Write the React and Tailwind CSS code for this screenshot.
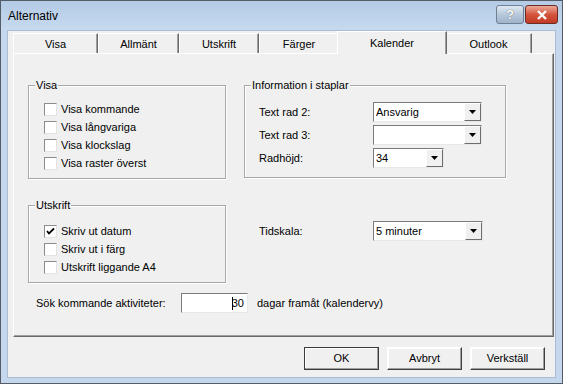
import React from 'react'

const font = "font-['Tahoma','Liberation_Sans',sans-serif]"

function Checkbox({ checked }) {
  return (
    <span className="w-[13px] h-[13px] bg-white border border-t-[#8c8c8c] border-l-[#8c8c8c] border-r-[#e3e3e3] border-b-[#e3e3e3] flex items-center justify-center shrink-0">
      {checked && (
        <svg width="9" height="9" viewBox="0 0 9 9">
          <path d="M1 4 L3 6.5 L8 1.5" stroke="#000" strokeWidth="1.8" fill="none" />
        </svg>
      )}
    </span>
  )
}

function CheckRow({ label, checked }) {
  return (
    <div className="flex items-center gap-[4px] h-[18px]">
      <Checkbox checked={checked} />
      <span>{label}</span>
    </div>
  )
}

function Group({ title, className, children }) {
  return (
    <div className={`relative border border-[#a8a8a8] shadow-[inset_1px_1px_0_#fff,1px_1px_0_#fff] ${className}`}>
      <span className="absolute -top-[8px] left-[6px] bg-[#f0f0f0] px-[1px] leading-[14px]">{title}</span>
      {children}
    </div>
  )
}

function Combo({ value, width }) {
  return (
    <div className={`h-[20px] bg-white flex items-stretch border border-t-[#7a7a7a] border-l-[#7a7a7a] border-r-[#e8e8e8] border-b-[#e8e8e8] ${width}`}>
      <span className="flex-1 pl-[2px] flex items-center">{value}</span>
      <span className="w-[17px] bg-[#f0f0f0] flex items-center justify-center border border-t-white border-l-white border-r-[#6d6d6d] border-b-[#6d6d6d]">
        <svg width="7" height="4" viewBox="0 0 7 4">
          <path d="M0 0 H7 L3.5 4 Z" fill="#000" />
        </svg>
      </span>
    </div>
  )
}

function Button({ label, isDefault }) {
  return (
    <button
      className={`w-[75px] h-[23px] bg-[#f0f0f0] text-black border ${
        isDefault ? 'border-[#3c3c3c]' : 'border-t-white border-l-white border-r-[#404040] border-b-[#404040]'
      } shadow-[inset_-1px_-1px_0_#a0a0a0,inset_1px_1px_0_#fff]`}
    >
      {label}
    </button>
  )
}

const tabs = [
  { label: 'Visa', w: 'w-[85px]' },
  { label: 'Allmänt', w: 'w-[81px]' },
  { label: 'Utskrift', w: 'w-[80px]' },
  { label: 'Färger', w: 'w-[80px]' },
  { label: 'Kalender', w: 'w-[110px]', active: true },
  { label: 'Outlook', w: 'w-[87px]' },
]

export default function App() {
  return (
    <div className={`w-[563px] h-[384px] ${font} text-[11px] text-black flex flex-col bg-[#c4d7ed] border border-[#555c66] overflow-hidden`}>
      {/* Title bar */}
      <div className="h-[29px] shrink-0 flex items-center pl-[7px] pr-[4px] bg-gradient-to-b from-[#b4cbe6] to-[#c6d9ef]">
        <span className="text-[12px] flex-1">Alternativ</span>
        <div className="flex gap-[1px] -mt-[2px]">
          <span className="w-[28px] h-[19px] rounded-[3px] border border-[#6f7f94] bg-gradient-to-b from-[#dfe8f2] via-[#b9c9db] to-[#9fb3cb] flex items-center justify-center text-white text-[13px] font-bold [text-shadow:0_0_1px_#334]">?</span>
          <span className="w-[33px] h-[19px] rounded-[3px] border border-[#6e2b23] bg-gradient-to-b from-[#e9a99a] via-[#d4543c] to-[#c13a24] flex items-center justify-center">
            <svg width="12" height="10" viewBox="0 0 12 10">
              <path d="M2 1 L10 9 M10 1 L2 9" stroke="#fff" strokeWidth="2.4" />
            </svg>
          </span>
        </div>
      </div>

      {/* Dialog body */}
      <div className="flex-1 mx-[6px] mb-[5px] bg-[#f0f0f0] flex flex-col pl-[5px] pr-[3px] border border-[#a9bcd3]">
        {/* Tabs */}
        <div className="h-[22px] flex items-end shrink-0">
          {tabs.map((t) =>
            t.active ? (
              <div
                key={t.label}
                className={`${t.w} h-[23px] -mb-[1px] -mx-[2px] relative z-10 bg-[#f0f0f0] border-t border-l border-t-white border-l-white border-r border-r-[#696969] shadow-[inset_-1px_0_0_#a0a0a0] flex items-start justify-center pt-[3px]`}
              >
                {t.label}
              </div>
            ) : (
              <div
                key={t.label}
                className={`${t.w} h-[20px] border-t border-l border-t-white border-l-white border-r border-r-[#696969] shadow-[inset_-1px_0_0_#a0a0a0] flex items-center justify-center pt-[2px]`}
              >
                {t.label}
              </div>
            )
          )}
        </div>

        {/* Tab panel */}
        <div className="h-[284px] w-[541px] border border-t-white border-l-white border-r-[#696969] border-b-[#696969] shadow-[inset_-1px_-1px_0_#a0a0a0] pt-[31px] pl-[14px]">
          <div className="flex gap-[18px]">
            <Group title="Visa" className="w-[198px] h-[94px] pt-[14px] pl-[15px]">
              <CheckRow label="Visa kommande" />
              <CheckRow label="Visa långvariga" />
              <CheckRow label="Visa klockslag" />
              <CheckRow label="Visa raster överst" />
            </Group>
            <Group title="Information i staplar" className="w-[262px] h-[93px] pt-[16px] pl-[14px] flex flex-col gap-[3px]">
              <div className="flex items-center">
                <span className="w-[114px]">Text rad 2:</span>
                <Combo value="Ansvarig" width="w-[109px]" />
              </div>
              <div className="flex items-center">
                <span className="w-[114px]">Text rad 3:</span>
                <Combo value="" width="w-[109px]" />
              </div>
              <div className="flex items-center">
                <span className="w-[114px]">Radhöjd:</span>
                <Combo value="34" width="w-[71px]" />
              </div>
            </Group>
          </div>

          <div className="flex mt-[26px]">
            <Group title="Utskrift" className="w-[198px] h-[78px] pt-[16px] pl-[15px]">
              <CheckRow label="Skriv ut datum" checked />
              <CheckRow label="Skriv ut i färg" />
              <CheckRow label="Utskrift liggande A4" />
            </Group>
            <div className="ml-[33px] mt-[16px] flex items-center h-[20px]">
              <span className="w-[114px]">Tidskala:</span>
              <Combo value="5 minuter" width="w-[110px]" />
            </div>
          </div>

          <div className="flex items-center mt-[10px] ml-[8px]">
            <span className="w-[145px]">Sök kommande aktiviteter:</span>
            <div className="w-[67px] h-[20px] bg-white border border-t-[#7a7a7a] border-l-[#7a7a7a] border-r-[#e8e8e8] border-b-[#e8e8e8] flex items-center justify-end pr-[3px]">
              <span className="w-[1px] h-[13px] bg-black mr-[-1px]" />
              <span>30</span>
            </div>
            <span className="ml-[9px]">dagar framåt (kalendervy)</span>
          </div>
        </div>

        {/* Buttons */}
        <div className="flex justify-end gap-[8px] mt-[10px] pr-[7px]">
          <Button label="OK" isDefault />
          <Button label="Avbryt" />
          <Button label="Verkställ" />
        </div>
      </div>
    </div>
  )
}
